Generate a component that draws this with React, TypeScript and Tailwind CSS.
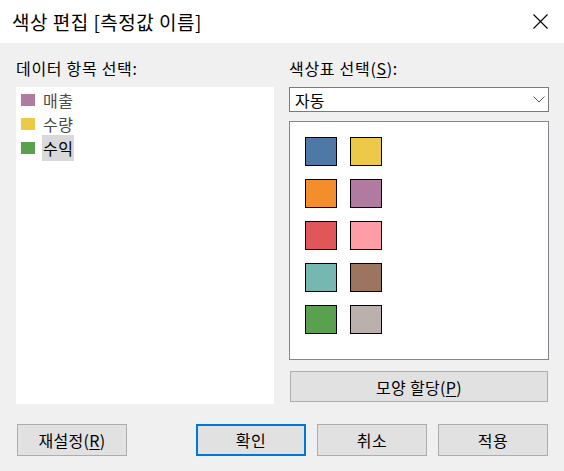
import React from "react";

const listItems = [
  { name: "매출", color: "#b07aa1" },
  { name: "수량", color: "#edc948" },
  { name: "수익", color: "#59a14f", selected: true },
];

const palette = [
  "#4e79a7", "#edc948",
  "#f28e2b", "#b07aa1",
  "#e15759", "#ff9da7",
  "#76b7b2", "#9c755f",
  "#59a14f", "#bab0ac",
];

export default function App() {
  return (
    <div
      className="w-[564px] h-[471px] bg-[#f0f0f0] flex flex-col text-black overflow-hidden"
      style={{ fontFamily: '"Noto Sans CJK KR", "Noto Sans", sans-serif' }}
    >
      {/* Title bar */}
      <div className="h-[43px] bg-white flex items-center justify-between pl-[12px] pr-[16px]">
        <span className="text-[19px] leading-[24px] tracking-[0.5px]">색상 편집 [측정값 이름]</span>
        <svg width="15" height="15" viewBox="0 0 15 15" className="block">
          <path d="M0.5 0.5 L14.5 14.5 M14.5 0.5 L0.5 14.5" stroke="#000" strokeWidth="1.1" fill="none" />
        </svg>
      </div>

      {/* Body */}
      <div className="flex pl-[16px] pt-[15px] gap-[15px] text-[16px]">
        {/* Left */}
        <div className="w-[258px] flex flex-col">
          <div className="h-[20px] leading-[20px] mb-[9px] tracking-[0.7px]">데이터 항목 선택:</div>
          <div className="h-[317px] bg-white pt-[1px]">
            {listItems.map((it) => (
              <div key={it.name} className="h-[24px] flex items-center">
                <span className="ml-[5px] w-[14px] h-[12px]" style={{ backgroundColor: it.color }} />
                <span
                  className={
                    it.selected
                      ? "ml-[7px] px-[1px] h-[26px] leading-[26px] bg-[#d9d9d9] text-black tracking-[0.5px]"
                      : "ml-[7px] px-[1px] leading-[24px] text-[#4a4a4a] tracking-[0.5px]"
                  }
                >
                  {it.name}
                </span>
              </div>
            ))}
          </div>
        </div>

        {/* Right */}
        <div className="w-[260px] flex flex-col">
          <div className="h-[20px] leading-[20px] mb-[9px] tracking-[0.7px]">
            색상표 선택(<span className="underline underline-offset-2">S</span>):
          </div>
          <div className="h-[25px] bg-white border border-[#7a7a7a] flex items-center justify-between pl-[5px] pr-[3px]">
            <span className="leading-[20px]">자동</span>
            <svg width="12" height="7" viewBox="0 0 12 7" className="block">
              <path d="M0.5 0.5 L6 6 L11.5 0.5" stroke="#555" strokeWidth="1" fill="none" />
            </svg>
          </div>
          <div className="mt-[9px] h-[239px] bg-white border border-[#82878f] pl-[15px] pt-[15px]">
            <div className="grid grid-cols-[32px_32px] gap-x-[13px] gap-y-[13px]">
              {palette.map((c, i) => (
                <div key={i} className="w-[32px] h-[29px] border border-black" style={{ backgroundColor: c }} />
              ))}
            </div>
          </div>
          <button className="mt-[11px] ml-[1px] w-[258px] h-[31px] bg-[#e1e1e1] border border-[#adadad] flex items-center justify-center">
            <span className="tracking-[0.3px]">
              모양 할당(<span className="underline underline-offset-2">P</span>)
            </span>
          </button>
        </div>
      </div>

      {/* Bottom buttons */}
      <div className="flex items-center mt-[20px] pl-[17px] text-[16px]">
        <button className="w-[110px] h-[32px] bg-[#e1e1e1] border border-[#adadad] flex items-center justify-center">
          <span className="tracking-[0.3px]">
            재설정(<span className="underline underline-offset-2">R</span>)
          </span>
        </button>
        <button className="ml-[69px] w-[110px] h-[32px] bg-[#e1e1e1] border-2 border-[#0078d7] flex items-center justify-center tracking-[0.5px]">
          확인
        </button>
        <button className="ml-[11px] w-[110px] h-[32px] bg-[#e1e1e1] border border-[#adadad] flex items-center justify-center tracking-[0.5px]">
          취소
        </button>
        <button className="ml-[11px] w-[110px] h-[32px] bg-[#e1e1e1] border border-[#adadad] flex items-center justify-center tracking-[0.5px]">
          적용
        </button>
      </div>
    </div>
  );
}
